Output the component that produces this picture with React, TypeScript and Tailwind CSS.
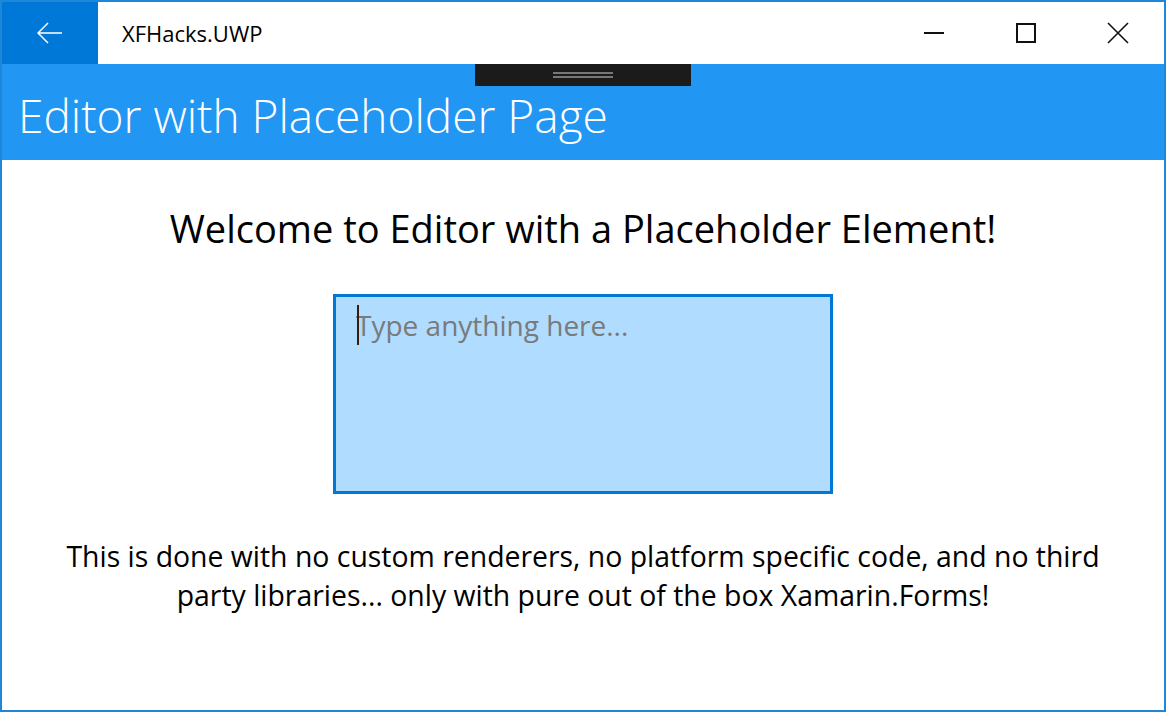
const font = { fontFamily: '"Open Sans", "Noto Sans", sans-serif' };

function TitleBar() {
  return (
    <div className="flex h-[62px] items-stretch bg-white">
      <div className="flex w-[96px] items-center justify-center bg-[#0078d7]">
        <svg width="26" height="22" viewBox="0 0 26 22" fill="none" stroke="white" strokeWidth="1.5">
          <path d="M1 11 H25 M11 1 L1 11 L11 21" />
        </svg>
      </div>
      <div className="flex flex-1 items-center pl-[24px] text-[22px] text-black">XFHacks.UWP</div>
      <div className="flex items-stretch">
        <div className="flex w-[92px] items-center justify-center">
          <div className="h-[2px] w-[20px] bg-[#111]" />
        </div>
        <div className="flex w-[92px] items-center justify-center">
          <div className="h-[20px] w-[20px] border-2 border-[#111]" />
        </div>
        <div className="flex w-[92px] items-center justify-center">
          <svg width="22" height="22" viewBox="0 0 22 22" fill="none" stroke="#111" strokeWidth="1.6">
            <path d="M1 1 L21 21 M21 1 L1 21" />
          </svg>
        </div>
      </div>
    </div>
  );
}

export default function App() {
  return (
    <div
      className="relative flex h-[712px] w-[1166px] flex-col overflow-hidden border-2 border-[#1f87d8] bg-white"
      style={font}
    >
      <TitleBar />
      <div className="flex h-[96px] items-center bg-[#2196f3] pl-[16px] pt-[6px]">
        <h1 className="text-[46px] font-light leading-none text-white">Editor with Placeholder Page</h1>
      </div>
      <div className="absolute left-[473px] top-[62px] flex h-[22px] w-[216px] flex-col items-center justify-center gap-[2px] bg-[#1b1b1b]">
        <div className="h-[2px] w-[60px] bg-[#777]" />
        <div className="h-[2px] w-[60px] bg-[#777]" />
      </div>
      <div className="flex flex-1 flex-col items-center">
        <p className="mt-[44px] text-[38px] leading-[48px] text-black">
          Welcome to Editor with a Placeholder Element!
        </p>
        <div className="relative mt-[42px] h-[200px] w-[500px] border-[3px] border-[#0078d7] bg-[#b0dcff] px-[20px] pt-[9px]">
          <div className="absolute left-[21px] top-[8px] h-[40px] w-[2px] bg-[#3a1a0a]" />
          <span className="text-[28px] leading-[38px] text-[#7a7a7a]">Type anything here...</span>
        </div>
        <p className="mt-[43px] w-[1050px] text-center text-[28.4px] leading-[39px] text-black">
          This is done with no custom renderers, no platform specific code, and no third party libraries... only with
          pure out of the box Xamarin.Forms!
        </p>
      </div>
    </div>
  );
}
